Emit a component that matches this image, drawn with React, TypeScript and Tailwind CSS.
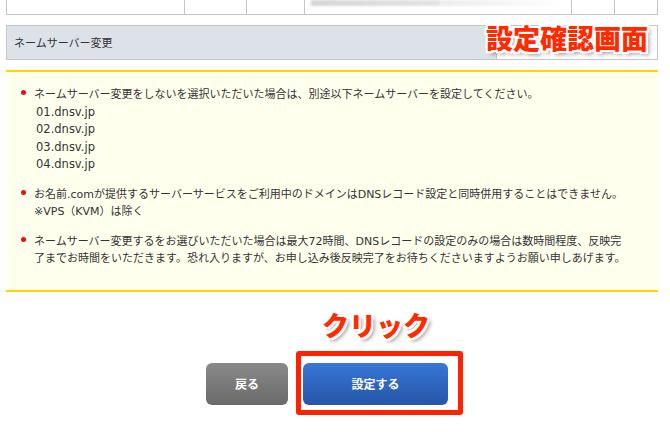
import React from "react";

const font = "font-['DejaVu_Sans','Noto_Sans_CJK_JP',sans-serif]";
const cjk = "font-['Noto_Sans_CJK_JP',sans-serif]";

function Item({ children }: { children: React.ReactNode }) {
  return (
    <li className="flex items-start">
      <span className="mt-[4px] mr-[8px] h-[5px] w-[5px] shrink-0 rounded-full bg-[#e3120b]" />
      <div className="leading-[17.5px]">{children}</div>
    </li>
  );
}

export default function App() {
  return (
    <div className={`relative h-[433px] w-[670px] overflow-hidden bg-white text-[11px] text-[#333] ${font}`}>
      <div className="relative ml-[6px] w-[652px]">
        {/* top table remnant */}
        <div className="flex h-[15px] border-b border-l border-[#c4c4c4]">
          <div className="w-[178px] border-r border-[#c4c4c4]" />
          <div className="w-[62px] border-r border-[#c4c4c4]" />
          <div className="w-[58px] border-r border-[#c4c4c4]" />
          <div className="flex w-[267px] border-r border-[#c4c4c4] pl-[6px]">
            <div className="h-[6px] w-[130px] bg-gradient-to-r from-[#d6d6d6] to-[#e4e4e4] blur-[1px]" />
            <div className="h-[6px] w-[120px] bg-gradient-to-r from-[#ececec] to-white blur-[1px]" />
          </div>
          <div className="w-[43px] border-r border-[#c4c4c4]" />
          <div className="w-[43px] border-r border-[#c4c4c4]" />
        </div>

        {/* gray row */}
        <div className="mt-[10px] flex h-[35px] w-[652px] border border-[#c2c5ca]">
          <div className={`flex w-[489px] items-center bg-[#dde1e8] pl-[7px] text-[11px] ${cjk}`}>
            ネームサーバー変更
          </div>
          <div className="flex-1 border-l border-[#c2c5ca] bg-white" />
        </div>

        <div
          className={`absolute left-[480px] top-[23px] whitespace-nowrap text-[27px] font-black leading-[30px] text-[#ff2a00] ${cjk} [text-shadow:-2px_-2px_0_#fff,2px_-2px_0_#fff,-2px_2px_0_#fff,2px_2px_0_#fff,0_2px_0_#fff,2px_0_0_#fff,-2px_0_0_#fff,0_-2px_0_#fff,3px_3px_4px_rgba(0,0,0,0.45)]`}
        >
          設定確認画面
        </div>

        {/* yellow notice */}
        <div className="mt-[10px] w-[652px] border-y-2 border-[#ffd400] bg-[#ffffee] pb-[22px] pl-[15px] pt-[14px]">
          <ul className="flex flex-col gap-[12px]">
            <Item>
              ネームサーバー変更をしないを選択いただいた場合は、別途以下ネームサーバーを設定してください。
              <div className="pl-[2px] text-[11.5px]">01.dnsv.jp</div>
              <div className="pl-[2px] text-[11.5px]">02.dnsv.jp</div>
              <div className="pl-[2px] text-[11.5px]">03.dnsv.jp</div>
              <div className="pl-[2px] text-[11.5px]">04.dnsv.jp</div>
            </Item>
            <Item>
              お名前.comが提供するサーバーサービスをご利用中のドメインはDNSレコード設定と同時併用することはできません。
              <br />
              ※VPS（KVM）は除く
            </Item>
            <Item>
              ネームサーバー変更するをお選びいただいた場合は最大72時間、DNSレコードの設定のみの場合は数時間程度、反映完
              <br />
              了までお時間をいただきます。恐れ入りますが、お申し込み後反映完了をお待ちくださいますようお願い申しあげます。
            </Item>
          </ul>
        </div>

        {/* buttons */}
        <div className={`mt-[71px] flex justify-center gap-[15px] pr-[10px] ${cjk}`}>
          <button className="flex h-[42px] w-[82px] items-center justify-center rounded-[6px] bg-gradient-to-b from-[#8a8a8a] to-[#6a6a6a] text-[12px] font-bold text-white">
            戻る
          </button>
          <div className="relative">
            <div className="absolute left-[19px] top-[-53px] whitespace-nowrap text-[27px] font-black leading-[30px] text-[#ff2a00] [text-shadow:-2px_-2px_0_#fff,2px_-2px_0_#fff,-2px_2px_0_#fff,2px_2px_0_#fff,3px_3px_4px_rgba(0,0,0,0.45)]">
              クリック
            </div>
            <div className="absolute left-[-7px] top-[-12px] h-[64px] w-[167px] rounded-[3px] border-[5px] border-[#ff2200]" />
            <button className="relative flex h-[42px] w-[145px] items-center justify-center rounded-[6px] bg-gradient-to-b from-[#3677d8] to-[#2755a8] text-[12px] font-bold text-white">
              設定する
            </button>
          </div>
        </div>
      </div>
    </div>
  );
}
